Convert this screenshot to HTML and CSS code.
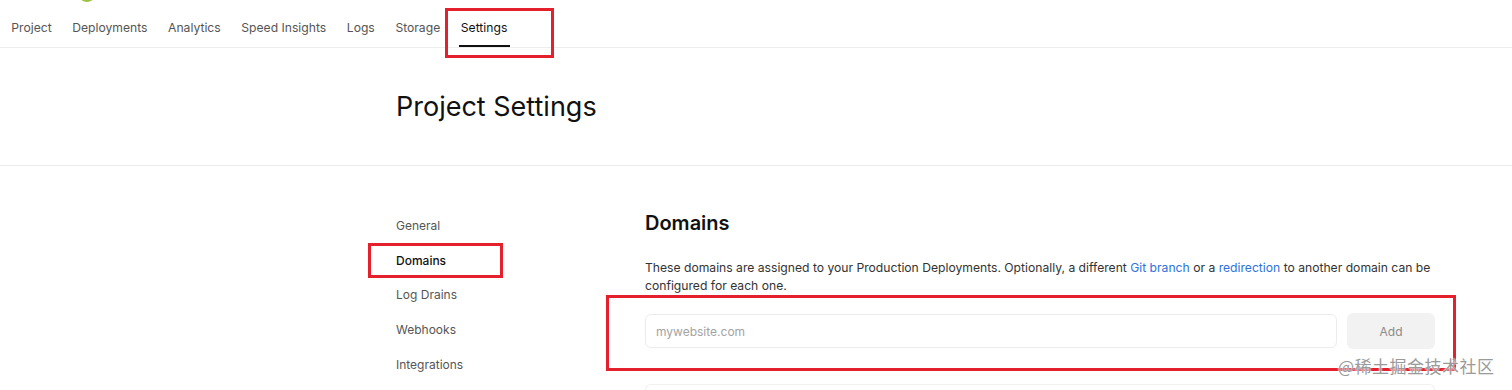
FILE: index.html
```html
<!DOCTYPE html>
<html lang="en">
<head>
    <meta charset="UTF-8">
    <title>Project Settings</title>
    <link rel="stylesheet" href="styles.css">
</head>
<body>
    <div class="logo-peek"></div>
    <nav class="tabs">
        <a>Project</a>
        <a>Deployments</a>
        <a>Analytics</a>
        <a>Speed Insights</a>
        <a>Logs</a>
        <a>Storage</a>
        <a class="active">Settings</a>
        <span class="mark mark-tab"></span>
    </nav>
    <header class="page-head">
        <h1>Project Settings</h1>
    </header>
    <div class="settings">
        <aside class="side">
            <a>General</a>
            <a class="current">Domains</a>
            <a>Log Drains</a>
            <a>Webhooks</a>
            <a>Integrations</a>
            <span class="mark mark-side"></span>
        </aside>
        <main class="content">
            <h2>Domains</h2>
            <p class="desc">These domains are assigned to your Production Deployments. Optionally, a different <a>Git branch</a> or a <a>redirection</a> to another domain can be configured for each one.</p>
            <div class="add-row">
                <input type="text" placeholder="mywebsite.com">
                <button>Add</button>
                <span class="mark mark-form"></span>
            </div>
            <div class="card"></div>
        </main>
    </div>
    <div class="watermark">@稀土掘金技术社区</div>
</body>
</html>
```

FILE: styles.css
```css
* {
    padding: 0;
    margin: 0;
    box-sizing: border-box;
}

body {
    background: #ffffff;
    font-family: Inter, 'Noto Sans', sans-serif;
    color: #111;
    height: 390px;
    overflow: hidden;
    position: relative;
}

.logo-peek {
    position: absolute;
    left: 80px;
    top: -10px;
    width: 14px;
    height: 12px;
    border-radius: 50%;
    border-bottom: 3px solid #9bc23a;
}

.tabs {
    display: flex;
    height: 48px;
    padding: 0 1px;
    border-bottom: 1px solid #ededed;
    position: relative;
}

.tabs a {
    font-size: 12.15px;
    color: #555;
    padding: 20px 10.3px 0;
    height: 47px;
}

.tabs a.active {
    color: #111;
    position: relative;
}

.tabs a.active::after {
    content: "";
    position: absolute;
    left: 8px;
    right: 8px;
    bottom: 0;
    height: 2px;
    background: #111;
}

.mark {
    position: absolute;
    border: 3px solid #e3202b;
}

.mark-tab {
    left: 445px;
    top: 8px;
    width: 109px;
    height: 50px;
}

.page-head {
    height: 118px;
    border-bottom: 1px solid #ebebeb;
    padding: 0 0 0 396px;
    display: flex;
    align-items: center;
}

.page-head h1 {
    font-size: 27px;
    font-weight: 400;
    color: #111;
}

.settings {
    display: flex;
    padding: 45px 0 0 396px;
}

.side {
    width: 249px;
    display: flex;
    flex-direction: column;
    position: relative;
}

.side a {
    font-size: 12px;
    color: #555;
    height: 34.7px;
    line-height: 20px;
    padding-top: 5px;
}

.side a.current {
    color: #111;
    font-weight: 500;
}

.mark-side {
    left: -28px;
    top: 32px;
    width: 135px;
    height: 35px;
}

.content {
    width: 790px;
}

.content h2 {
    font-size: 20px;
    font-weight: 600;
    margin-top: -3px;
    line-height: 30px;
}

.desc {
    font-size: 12.15px;
    line-height: 18px;
    color: #333;
    margin-top: 21px;
}

.desc a {
    color: #2c72e0;
}

.add-row {
    display: flex;
    gap: 10px;
    margin-top: 18px;
    position: relative;
}

.add-row input {
    flex: 1;
    height: 34px;
    border: 1px solid #ececec;
    border-radius: 6px;
    padding: 0 10px;
    font-family: inherit;
    font-size: 12px;
    margin-top: 1px;
}

.add-row input::placeholder {
    color: #a3a3a3;
}

.add-row button {
    width: 88px;
    height: 36px;
    border: none;
    border-radius: 6px;
    background: #f2f2f2;
    color: #8a8a8a;
    font-family: inherit;
    font-size: 12px;
}

.mark-form {
    left: -39px;
    top: -18px;
    width: 850px;
    height: 76px;
}

.card {
    margin-top: 35px;
    height: 7px;
    border: 1px solid #f0f0f0;
    border-bottom: none;
    border-radius: 6px 6px 0 0;
}

.watermark {
    position: absolute;
    left: 1338px;
    top: 353px;
    font-size: 17px;
    color: #9a9a9a;
    font-family: 'Noto Sans CJK SC', sans-serif;
    text-shadow: 0 0 2px #fff, 0 0 2px #fff;
    letter-spacing: 0.5px;
}
```
